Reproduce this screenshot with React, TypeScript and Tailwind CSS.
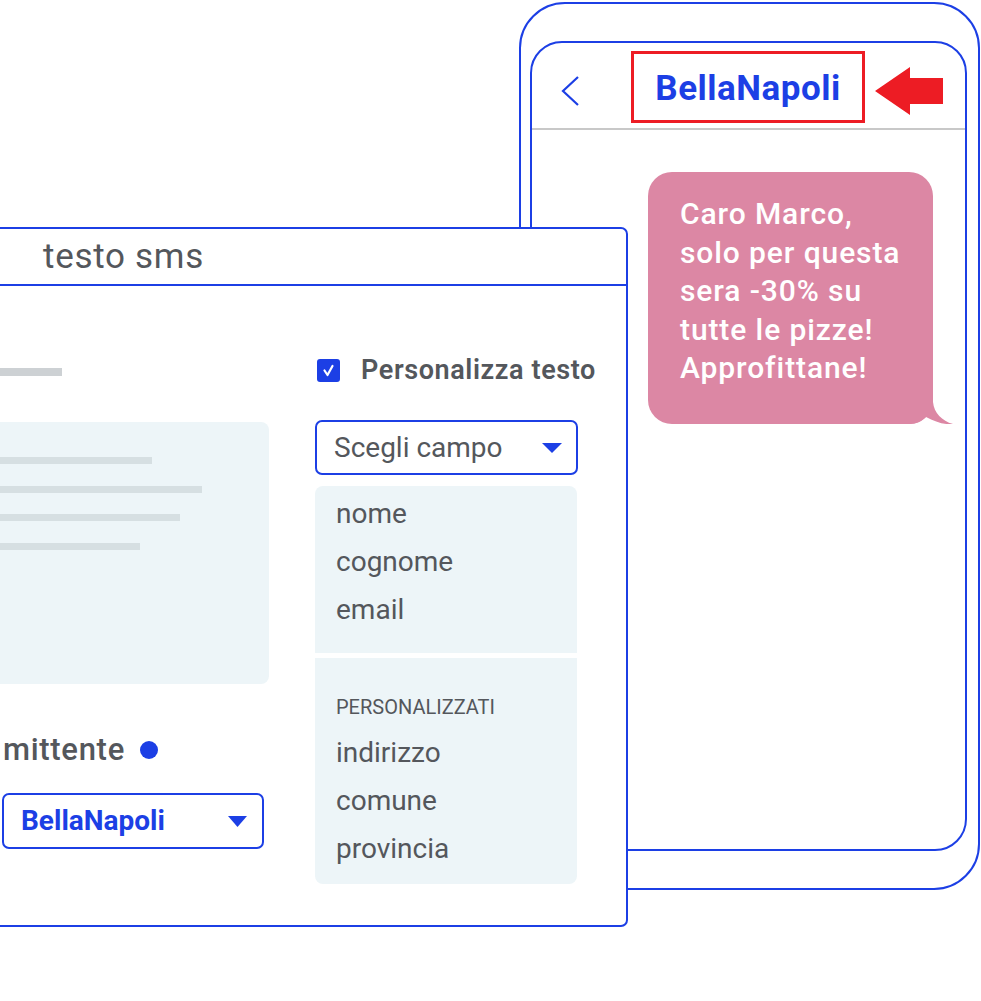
import React from "react";

const BLUE = "#1c3fe5";

function Tri({ w, h }: { w: number; h: number }) {
  return (
    <svg width={w} height={h} viewBox={`0 0 ${w} ${h}`}>
      <polygon points={`0,0 ${w},0 ${w / 2},${h}`} fill={BLUE} />
    </svg>
  );
}

export default function App() {
  return (
    <div className="relative w-[981px] h-[1001px] overflow-hidden bg-white font-['Roboto','Liberation_Sans',sans-serif] text-[#54575c]">
      {/* Phone */}
      <div className="absolute left-[519px] top-[2px] w-[461px] h-[888px] border-2 border-[#1c3fe5] rounded-[46px] flex pl-[9px] pr-[11px] pt-[37px] pb-[37px]">
        <div className="flex-1 border-2 border-[#1c3fe5] rounded-[32px] flex flex-col overflow-hidden">
          <div className="h-[87px] shrink-0 border-b-2 border-[#c8c8c8] flex items-start">
            <svg className="ml-[29px] mt-[31px] shrink-0" width="20" height="32" viewBox="0 0 20 32">
              <polyline points="17,3 2,17 17,31" fill="none" stroke={BLUE} strokeWidth="2.2" />
            </svg>
            <div className="ml-[50px] mt-[8px] w-[234px] h-[72px] shrink-0 border-[3px] border-[#ed1c24] flex items-center justify-center">
              <span className="text-[35px] leading-none font-bold tracking-[0.5px] text-[#1c3fe5] pt-[2px] whitespace-nowrap">BellaNapoli</span>
            </div>
            <svg className="ml-[10px] mt-[24px] shrink-0" width="68" height="48" viewBox="0 0 68 48">
              <path d="M0 24 L35 0 L35 11 L68 11 L68 37 L35 37 L35 48 Z" fill="#ed1c24" />
            </svg>
          </div>
          <div className="flex">
            <div className="relative ml-[116px] mt-[42px] w-[285px] h-[252px] rounded-[24px] bg-[#dc87a4] pl-[32px] pt-[23px] text-white text-[30px] tracking-[0.9px] font-medium leading-[38.5px] whitespace-nowrap">
              <div>Caro Marco,</div>
              <div>solo per questa</div>
              <div>sera -30% su</div>
              <div>tutte le pizze!</div>
              <div>Approfittane!</div>
              <svg className="absolute right-[-20px] bottom-0" width="53" height="35" viewBox="0 0 53 35">
                <path d="M0 0 L33 0 L33 13 C34 24 42 32 53 35 C45 36 35 33 26 28 C22 32 17 35 10 35 L0 35 Z" fill="#dc87a4" />
              </svg>
            </div>
          </div>
        </div>
      </div>

      {/* Panel */}
      <div className="absolute left-[-10px] top-[227px] w-[638px] h-[700px] border-2 border-[#1c3fe5] rounded-r-[7px] bg-white flex flex-col">
        <div className="h-[57px] shrink-0 border-b-2 border-[#1c3fe5] flex items-center pl-[51px]">
          <span className="text-[35px] tracking-[0.7px] leading-none">testo sms</span>
        </div>
        <div className="flex">
          {/* left column */}
          <div className="w-[277px] shrink-0 flex flex-col">
            <div className="mt-[82px] h-[8px] w-[70px] bg-[#cdd1d4]" />
            <div className="mt-[46px] h-[262px] rounded-[8px] bg-[#edf5f8] pt-[35px] flex flex-col gap-[21.7px]">
              <div className="h-[7px] w-[160px] bg-[#d6dfe2]" />
              <div className="h-[7px] w-[210px] bg-[#d6dfe2]" />
              <div className="h-[7px] w-[188px] bg-[#d6dfe2]" />
              <div className="h-[7px] w-[148px] bg-[#d6dfe2]" />
            </div>
            <div className="mt-[50px] pl-[11px] flex items-center h-[32px]">
              <span className="text-[31px] tracking-[0.7px] font-medium leading-[32px]">mittente</span>
              <span className="ml-[15px] w-[18px] h-[18px] shrink-0 rounded-full bg-[#1c3fe5]" />
            </div>
            <div className="mt-[27px] ml-[10px] w-[262px] h-[56px] border-2 border-[#1c3fe5] rounded-[7px] flex items-center justify-between pl-[17px] pr-[15px]">
              <span className="text-[28px] font-bold text-[#1c3fe5] leading-none">BellaNapoli</span>
              <Tri w={19} h={11} />
            </div>
          </div>
          {/* right column */}
          <div className="ml-[46px] w-[263px] shrink-0 flex flex-col">
            <div className="mt-[72px] h-[24px] flex items-center whitespace-nowrap">
              <div className="ml-[2px] w-[23px] h-[23px] shrink-0 rounded-[3px] bg-[#1c3fe5] flex items-center justify-center">
                <svg width="15" height="15" viewBox="0 0 15 15">
                  <polyline points="3.5,7.5 6.5,12 11.5,3" fill="none" stroke="white" strokeWidth="2.2" strokeLinecap="round" strokeLinejoin="round" />
                </svg>
              </div>
              <span className="ml-[21px] text-[27px] tracking-[0.6px] font-semibold leading-none">Personalizza testo</span>
            </div>
            <div className="mt-[38px] h-[55px] border-2 border-[#1c3fe5] rounded-[7px] flex items-center justify-between pl-[17px] pr-[14px]">
              <span className="text-[28px] leading-none">Scegli campo</span>
              <Tri w={20} h={10} />
            </div>
            <div className="mt-[11px] w-[262px] flex flex-col">
              <div className="h-[167px] rounded-t-[8px] bg-[#edf5f8] pt-[4px] pl-[21px] text-[28px] leading-[48px]">
                <div>nome</div>
                <div>cognome</div>
                <div>email</div>
              </div>
              <div className="mt-[5px] h-[226px] rounded-b-[8px] bg-[#edf5f8] pt-[35px] pl-[21px]">
                <div className="text-[20px] leading-[28px]">PERSONALIZZATI</div>
                <div className="mt-[8px] text-[28px] leading-[48px]">
                  <div>indirizzo</div>
                  <div>comune</div>
                  <div>provincia</div>
                </div>
              </div>
            </div>
          </div>
        </div>
      </div>
    </div>
  );
}
